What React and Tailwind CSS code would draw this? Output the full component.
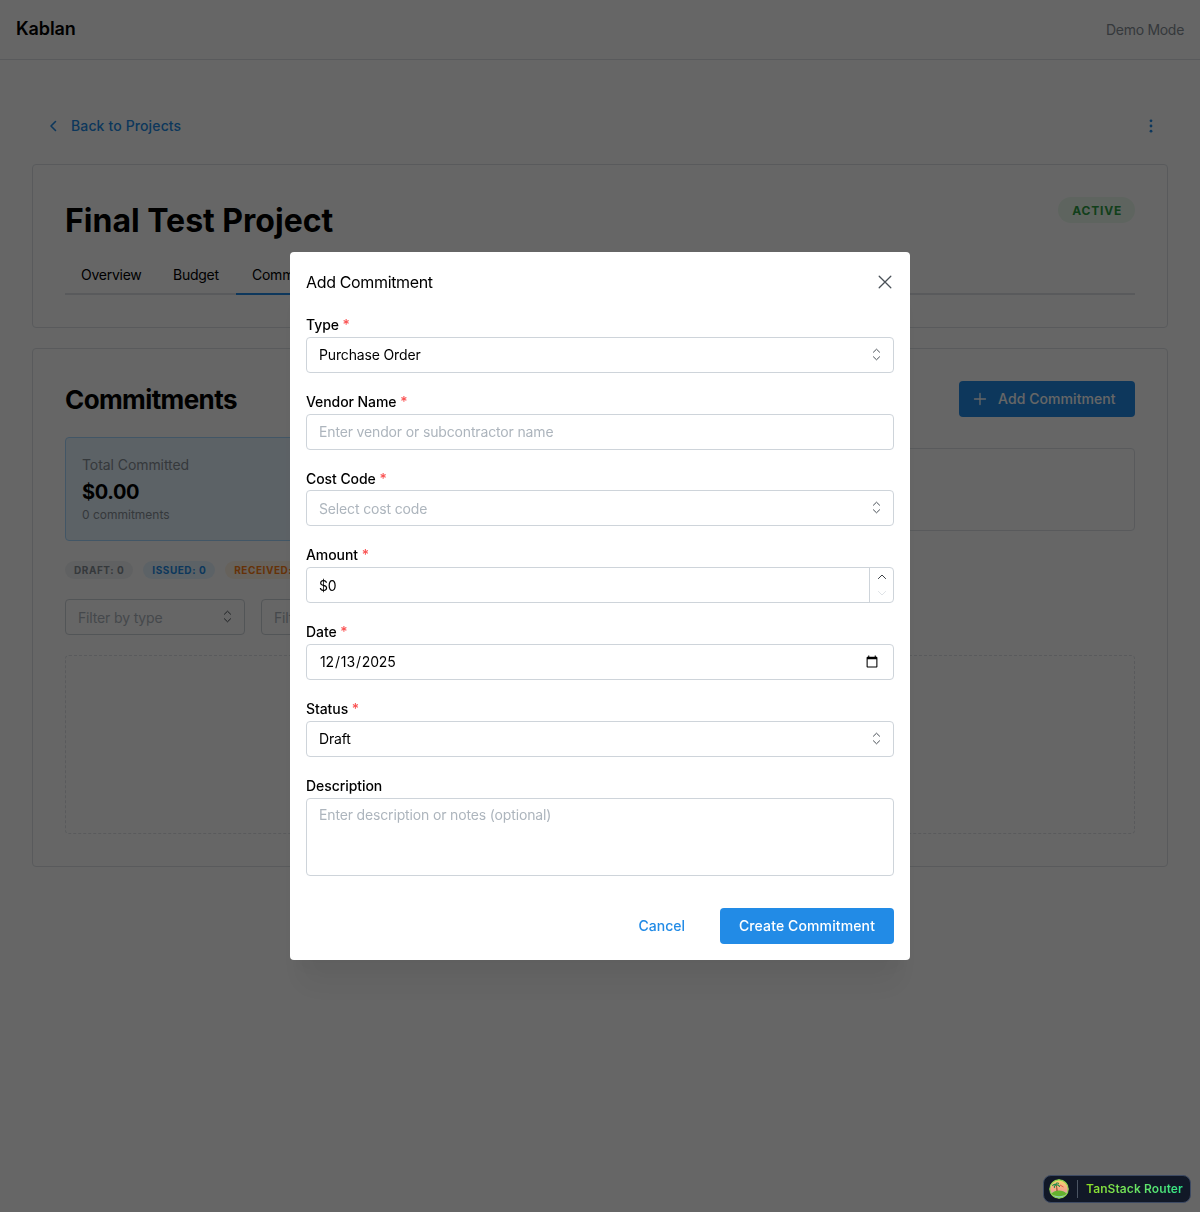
import React from "react";

function UpDown({ className = "" }) {
  return (
    <svg width="15" height="15" viewBox="0 0 15 15" fill="none" stroke="#495057" strokeWidth="1" strokeLinecap="round" strokeLinejoin="round" className={className}>
      <path d="M4.4 5.2 L7.5 2.2 L10.6 5.2" />
      <path d="M4.4 9.8 L7.5 12.8 L10.6 9.8" />
    </svg>
  );
}

function Label({ text, required, extra = "mb-px" }) {
  return (
    <label className={"block text-sm font-medium leading-[21.7px] text-black tracking-[-0.07px] " + extra}>
      {text}
      {required && <span className="text-[#fa5252]"> *</span>}
    </label>
  );
}

const inputCls =
  "block w-full h-9 rounded border border-[#ced4da] bg-white px-3 text-sm tracking-[-0.15px] text-black placeholder:text-[#adb5bd] outline-none";

function Field({ label, required, extra, children }) {
  return (
    <div>
      <Label text={label} required={required} extra={extra} />
      {children}
    </div>
  );
}

function SelectBox({ value, placeholder }) {
  return (
    <div className="relative">
      <input readOnly defaultValue={value} placeholder={placeholder} className={inputCls + " pr-8"} />
      <UpDown className="absolute right-[10.5px] top-[10px]" />
    </div>
  );
}

function Tab({ children, active, width = "" }) {
  return (
    <div className={"h-[38px] px-4 flex items-center text-sm tracking-[-0.25px] text-black -mb-0.5 border-b-2 " + width + " " + (active ? "border-[#228be6]" : "border-transparent")}>
      {children}
    </div>
  );
}

function Pill({ children, cls }) {
  return (
    <span className={"h-[18px] rounded-full px-[9px] flex items-center text-[10px] font-bold tracking-[0.55px] uppercase " + cls}>
      {children}
    </span>
  );
}

function Logo() {
  return (
    <svg width="20" height="20" viewBox="0 0 20 20" className="rounded-full">
      <defs>
        <linearGradient id="sky" x1="0" y1="0" x2="0" y2="1">
          <stop offset="0" stopColor="#f8d66d" />
          <stop offset="0.55" stopColor="#f7a48b" />
          <stop offset="1" stopColor="#7dd3c0" />
        </linearGradient>
      </defs>
      <circle cx="10" cy="10" r="10" fill="#8fd14f" />
      <circle cx="10" cy="10" r="8.6" fill="url(#sky)" />
      <path d="M2.5 14.5 C6 10.5 14 10.5 17.5 14.5 C15.5 18 4.5 18 2.5 14.5Z" fill="#65b32e" />
      <path d="M8 12 C8 9 7.5 7.5 7 6" stroke="#7a4a21" strokeWidth="1" fill="none" />
      <path d="M7 6 C5.5 4.8 4 5.4 3.5 7 M7 6 C6.5 4 8.5 3.4 10 4.5 M7 6 C9 5.4 10.5 6.5 10.5 8 M7 6 C5.5 6.4 5 7.8 5.5 9" stroke="#1f8a4c" strokeWidth="1.1" fill="none" />
      <path d="M11 6 L14.5 8" stroke="#e2574c" strokeWidth="1" />
    </svg>
  );
}

export default function App() {
  return (
    <div className="relative min-h-[1212px] bg-white font-['Inter',sans-serif] text-black">
      <header className="h-[60px] border-b border-[#dee2e6] flex items-center justify-between px-4">
        <span className="text-lg font-semibold tracking-[-0.1px] pb-0.5">Kablan</span>
        <span className="text-sm text-[#868e96] tracking-[-0.3px]">Demo Mode</span>
      </header>

      <main className="px-8 pt-12">
        <div className="h-9 flex items-center justify-between pl-[13px] pr-[9px] mb-5">
          <div className="flex items-center gap-[10px] text-sm font-medium tracking-[0.13px] text-[#228be6]">
            <svg width="16" height="16" viewBox="0 0 16 16" fill="none" stroke="#228be6" strokeWidth="1.6" strokeLinecap="round" strokeLinejoin="round"><path d="M10.5 3.5 L6 8 L10.5 12.5" /></svg>
            <span>Back to Projects</span>
          </div>
          <svg width="16" height="16" viewBox="0 0 16 16" fill="#228be6"><circle cx="8" cy="2.8" r="1.4" /><circle cx="8" cy="8" r="1.4" /><circle cx="8" cy="13.2" r="1.4" /></svg>
        </div>

        <section className="border border-[#dee2e6] rounded p-8 h-[164px] mb-5">
          <div className="flex items-start justify-between h-[46px] mb-[14px]">
            <h1 className="text-[32px] leading-[48px] font-bold">Final Test Project</h1>
            <span className="h-[26px] rounded-full bg-[#ebfbee] text-[#2f9e44] text-xs font-bold tracking-[0.8px] pl-[14px] pr-[13px] pt-[2px] flex items-center">ACTIVE</span>
          </div>
          <div className="flex border-b-2 border-[#dee2e6]">
            <Tab width="w-[92px]">Overview</Tab>
            <Tab width="w-[79px]">Budget</Tab>
            <Tab active>Commitments</Tab>
          </div>
        </section>

        <section className="border border-[#dee2e6] rounded p-8 pb-8">
          <div className="flex items-center justify-between mb-5">
            <h2 className="text-[26px] font-bold h-9 leading-[38px] tracking-[-0.6px]">Commitments</h2>
            <div className="w-[176px] h-9 rounded bg-[#228be6] text-white text-sm font-medium tracking-[0.08px] flex items-center pl-[14px] gap-[11px]">
              <svg width="14" height="14" viewBox="0 0 14 14" fill="none" stroke="white" strokeWidth="1.3" strokeLinecap="round"><path d="M7 1.5 V12.5 M1.5 7 H12.5" /></svg>
              <span>Add Commitment</span>
            </div>
          </div>

          <div className="grid grid-cols-4 gap-4 items-center mb-5">
            <div className="h-[104px] rounded border border-[#a5d8ff] bg-[#e7f5ff] px-4 pt-[16px]">
              <div className="text-sm text-[#868e96] leading-[22px] tracking-[-0.07px]">Total Committed</div>
              <div className="text-xl font-bold leading-[32px] tracking-[-0.4px]">$0.00</div>
              <div className="text-xs text-[#868e96] leading-[14px]">0 commitments</div>
            </div>
            <div className="h-[83px] rounded border border-[#dee2e6]" />
            <div className="h-[83px] rounded border border-[#dee2e6]" />
            <div className="h-[83px] rounded border border-[#dee2e6]" />
          </div>

          <div className="flex gap-[10px] mb-5">
            <Pill cls="bg-[#f1f3f5] text-[#868e96]">Draft: 0</Pill>
            <Pill cls="bg-[#e7f5ff] text-[#228be6]">Issued: 0</Pill>
            <Pill cls="bg-[#fff4e6] text-[#fd7e14]">Received: 0</Pill>
          </div>

          <div className="flex gap-4 mb-5">
            <div className="relative w-[180px]">
              <input readOnly placeholder="Filter by type" className={inputCls} />
              <UpDown className="absolute right-[10.5px] top-[10px]" />
            </div>
            <div className="relative w-[180px]">
              <input readOnly placeholder="Filter by status" className={inputCls} />
              <UpDown className="absolute right-[10.5px] top-[10px]" />
            </div>
          </div>

          <div className="h-[179px] rounded border border-dashed border-[#dee2e6]" />
        </section>
      </main>

      <div className="fixed inset-0 bg-black/60 flex items-center justify-center">
        <div className="w-[620px] h-[708px] bg-white rounded shadow-[0_36px_28px_-7px_rgba(0,0,0,0.05),0_17px_17px_-7px_rgba(0,0,0,0.04)] px-4 pb-4">
          <div className="h-[62.2px] flex items-center justify-between pb-0.5">
            <span className="text-base tracking-[-0.35px]">Add Commitment</span>
            <svg width="18" height="18" viewBox="0 0 18 18" fill="none" stroke="#495057" strokeWidth="1.3" strokeLinecap="round">
              <path d="M3.2 3.2 L14.8 14.8 M14.8 3.2 L3.2 14.8" />
            </svg>
          </div>
          <div className="flex flex-col gap-[18.07px]">
            <Field label="Type" required><SelectBox value="Purchase Order" /></Field>
            <Field label="Vendor Name" required><input placeholder="Enter vendor or subcontractor name" className={inputCls} /></Field>
            <Field label="Cost Code" required><SelectBox placeholder="Select cost code" /></Field>
            <Field label="Amount" required>
              <div className="relative">
                <input readOnly defaultValue="$0" className={inputCls + " pt-[1px]"} />
                <div className="absolute right-px top-px bottom-px w-[24px] border-l border-[#ced4da] flex flex-col items-center justify-between py-[3px]">
                  <svg width="12" height="12" viewBox="0 0 15 15" fill="none" stroke="#343a40" strokeWidth="1.2" strokeLinecap="round" strokeLinejoin="round"><path d="M3 9.5 L7.5 5 L12 9.5" /></svg>
                  <svg width="12" height="12" viewBox="0 0 15 15" fill="none" stroke="#dee2e6" strokeWidth="1.2" strokeLinecap="round" strokeLinejoin="round"><path d="M3 5.5 L7.5 10 L12 5.5" /></svg>
                </div>
              </div>
            </Field>
            <Field label="Date" required><input type="date" defaultValue="2025-12-13" className={inputCls} /></Field>
            <Field label="Status" required><SelectBox value="Draft" /></Field>
            <Field label="Description" extra="mb-[2px]">
              <textarea placeholder="Enter description or notes (optional)" className="block w-full h-[78px] rounded border border-[#ced4da] bg-white px-3 py-[6px] text-sm tracking-[-0.15px] placeholder:text-[#adb5bd] outline-none resize-none" />
            </Field>
          </div>
          <div className="flex justify-end items-center mt-8">
            <span className="text-sm font-medium text-[#228be6] mr-[35px]">Cancel</span>
            <div className="w-[174px] h-9 rounded bg-[#228be6] text-white text-sm font-medium tracking-[0.12px] flex items-center justify-center">Create Commitment</div>
          </div>
        </div>
      </div>

      <div className="fixed right-[9px] bottom-[9px] h-[28px] w-[148px] rounded-lg border border-[#3d4a63] bg-[#111827] flex items-center pl-[5px]">
        <Logo />
        <span className="w-px h-[18px] bg-[#4b5563] ml-2 mr-2" />
        <span className="text-xs font-semibold tracking-[0.1px] bg-linear-to-r from-[#8fe01f] to-[#2be587] bg-clip-text text-transparent">TanStack Router</span>
      </div>
    </div>
  );
}
